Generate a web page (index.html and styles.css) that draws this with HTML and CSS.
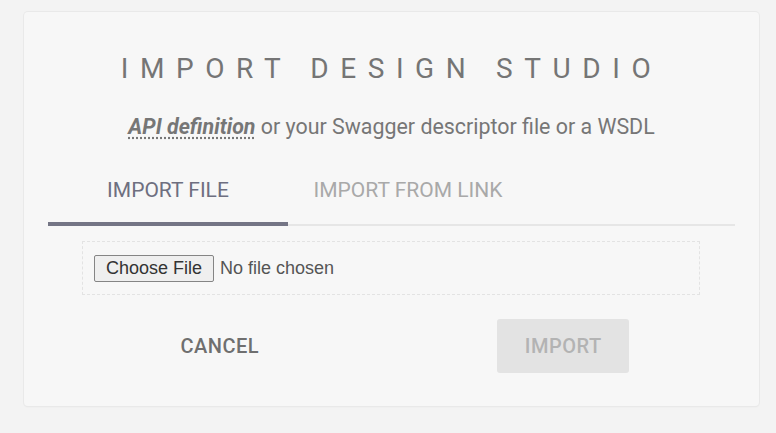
FILE: index.html
```html
<!DOCTYPE html>
<html>
<head>
<meta charset="utf-8">
<link rel="stylesheet" href="styles.css">
</head>
<body>
<div class="card">
  <h1 class="title">IMPORT DESIGN STUDIO</h1>
  <p class="subtitle"><span class="term">API definition</span> or your Swagger descriptor file or a WSDL</p>
  <div class="tabs">
    <div class="tab active">IMPORT FILE</div>
    <div class="tab">IMPORT FROM LINK</div>
  </div>
  <div class="drop">
    <span class="choose">Choose File</span>
    <span class="nofile">No file chosen</span>
  </div>
  <div class="actions">
    <div class="half"><button class="btn cancel">CANCEL</button></div>
    <div class="half"><button class="btn import">IMPORT</button></div>
  </div>
</div>
</body>
</html>
```
FILE: styles.css
```css
* { box-sizing: border-box; }
html, body { margin: 0; padding: 0; }
body {
  background: #f3f3f3;
  font-family: Roboto, "Liberation Sans", sans-serif;
  width: 776px;
  height: 433px;
  padding: 12px 17px 0 24px;
}
.card {
  width: 735px;
  height: 394px;
  background: #f7f7f7;
  border-radius: 4px;
  box-shadow: 0 0 0 1px #e9e9e9, 0 1px 2px rgba(0,0,0,0.06);
  padding: 0 24px;
  display: flex;
  flex-direction: column;
}
.title {
  margin: 41px 0 0;
  text-align: center;
  font-weight: 400;
  font-size: 28px;
  line-height: 32px;
  letter-spacing: 11.6px;
  color: #757575;
}
.subtitle {
  margin: 30px 0 0;
  text-align: center;
  font-size: 21.4px;
  line-height: 24px;
  color: #767676;
}
.term {
  font-weight: 700;
  font-style: italic;
  text-decoration: underline dotted #777;
  text-underline-offset: 3px;
}
.tabs {
  margin-top: 30px;
  display: flex;
  border-bottom: 2px solid #e6e6e6;
}
.tab {
  width: 240px;
  text-align: center;
  font-size: 21px;
  line-height: 24px;
  padding: 9px 0 20px;
  color: #a9a9a9;
  margin-bottom: -2px;
  border-bottom: 4px solid transparent;
}
.tab.active {
  color: #6e6f80;
  border-bottom-color: #747585;
}
.drop {
  margin: 15px 35px 0 34px;
  height: 54px;
  border: 1px dashed #e3e3e3;
  display: flex;
  align-items: center;
  padding-left: 11px;
  font-family: "Liberation Sans", Arial, sans-serif;
}
.choose {
  width: 120px;
  height: 27px;
  border: 1px solid #858585;
  border-radius: 2px;
  background: #efefef;
  color: #333;
  font-size: 18px;
  display: flex;
  align-items: center;
  justify-content: center;
}
.nofile {
  margin-left: 6px;
  font-size: 18px;
  color: #555;
}
.actions {
  margin-top: 24px;
  display: flex;
}
.half {
  flex: 1;
  display: flex;
  justify-content: center;
}
.btn {
  width: 132px;
  height: 54px;
  border: none;
  border-radius: 3px;
  font-family: Roboto, "Liberation Sans", sans-serif;
  font-size: 20px;
  font-weight: 500;
  letter-spacing: 0.5px;
  background: transparent;
  padding: 0;
}
.cancel { color: #6f6f6f; }
.import { background: #e3e3e3; color: #b3b3b3; }
```
